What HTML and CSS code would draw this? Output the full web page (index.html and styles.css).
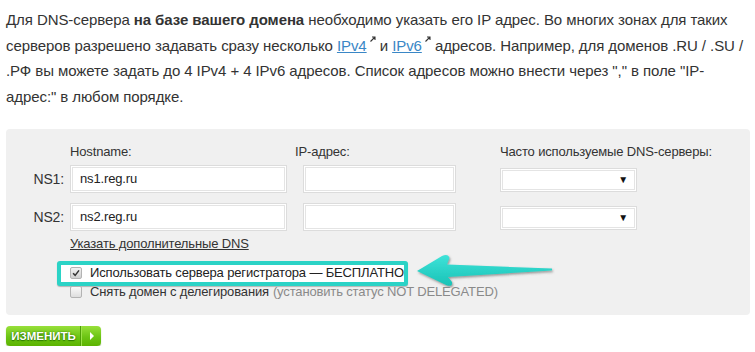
FILE: index.html
```html
<!DOCTYPE html>
<html>
<head>
    <title>DNS-серверы</title>
    <link rel="stylesheet" href="styles.css">
</head>
<body>
<div class="page">
    <p class="intro">
        Для DNS-сервера <b>на базе вашего домена</b> необходимо указать его IP адрес. Во многих зонах для таких
        серверов разрешено задавать сразу несколько <a href="#">IPv4</a><svg class="ext" viewBox="0 0 6 6"><path d="M0.5 5.5 L5 1 M2 1 H5 V4" fill="none" stroke="#333" stroke-width="1.1"/></svg> и
        <a href="#">IPv6</a><svg class="ext" viewBox="0 0 6 6"><path d="M0.5 5.5 L5 1 M2 1 H5 V4" fill="none" stroke="#333" stroke-width="1.1"/></svg> адресов. Например, для доменов .RU / .SU /
        .РФ вы можете задать до 4 IPv4 + 4 IPv6 адресов. Список адресов можно внести через "," в поле "IP-адрес:" в любом порядке.
    </p>

    <div class="dns-box">
        <div class="ns-head">
            <span class="h-host">Hostname:</span>
            <span class="h-ip">IP-адрес:</span>
            <span class="h-dns">Часто используемые DNS-серверы:</span>
        </div>

        <div class="ns-row">
            <label class="ns-label">NS1:</label>
            <input class="field host" value="ns1.reg.ru">
            <input class="field ip" value="">
            <div class="select"><span>▼</span></div>
        </div>
        <div class="ns-row last">
            <label class="ns-label">NS2:</label>
            <input class="field host" value="ns2.reg.ru">
            <input class="field ip" value="">
            <div class="select"><span>▼</span></div>
        </div>

        <div class="extra">
            <a href="#" class="more-dns">Указать дополнительные DNS</a>

            <div class="check-line marked">
                <span class="box checked"><svg viewBox="0 0 12 12"><path d="M2.5 6.2 L5 8.8 L9.6 2.8" fill="none" stroke="#333" stroke-width="1.8"/></svg></span>
                Использовать сервера регистратора — БЕСПЛАТНО
                <svg class="pointer" viewBox="0 0 142 36">
                    <defs>
                        <linearGradient id="teal" x1="0" y1="0" x2="0" y2="1">
                            <stop offset="0" stop-color="#3fe3d9"/>
                            <stop offset="1" stop-color="#18c2b6"/>
                        </linearGradient>
                        <filter id="sh" x="-10%" y="-30%" width="130%" height="170%">
                            <feDropShadow dx="1" dy="1.5" stdDeviation="0.8" flood-color="#555" flood-opacity="0.6"/>
                        </filter>
                    </defs>
                    <path d="M4 19 L29 4 Q35 1 36.5 6 L34 12.5 L139 16.5 L139 18.5 L35 25 L39 30 Q40 35 34 33.5 Z" fill="url(#teal)" filter="url(#sh)"/>
                </svg>
            </div>
            <div class="check-line">
                <span class="box"></span>
                Снять домен с делегирования <span class="note">(установить статус NOT DELEGATED)</span>
            </div>
        </div>
    </div>

    <button class="btn-change"><span class="btn-text">ИЗМЕНИТЬ</span><span class="btn-arrow"></span></button>
</div>
</body>
</html>
```

FILE: styles.css
```css
body {
    margin: 0;
    font-family: "Liberation Sans", Arial, sans-serif;
    color: #333;
    background: #fff;
}

.page {
    padding: 0 5px 0 6px;
}

.intro {
    margin: 7px 0 0;
    font-size: 15px;
    line-height: 25.7px;
    letter-spacing: -0.08px;
}

.intro a {
    color: #3a87c6;
}

.ext {
    width: 6px;
    height: 6px;
    margin: 0 0 0 3px;
    vertical-align: 9px;
}

.dns-box {
    margin-top: 19px;
    width: 744px;
    box-sizing: border-box;
    background: #f0f0f0;
    border-radius: 4px;
    padding: 15px 0 15px 0;
    font-size: 13px;
    letter-spacing: -0.15px;
}

.ns-head {
    display: flex;
    padding-left: 64px;
    line-height: 16px;
    margin-bottom: 5px;
}

.h-host { width: 225px; }
.h-ip { width: 205px; }

.ns-row {
    display: flex;
    align-items: center;
    height: 28px;
    margin-bottom: 10px;
}

.ns-row.last {
    margin-bottom: 5px;
}

.ns-label {
    width: 58px;
    margin-right: 6px;
    text-align: right;
    font-size: 14px;
}

.field {
    box-sizing: border-box;
    height: 28px;
    border: 1px solid #dcdcdc;
    box-shadow: inset 0 0 0 1px #fff, inset 0 0 0 2px #e4e4e4;
    padding: 0 9px;
    font-family: inherit;
    font-size: 13px;
    letter-spacing: -0.15px;
    color: #222;
    background: #fff;
    outline: none;
}

.field.host {
    width: 217px;
    margin-right: 16px;
}

.field.ip {
    width: 153px;
    margin-right: 44px;
}

.select {
    box-sizing: border-box;
    width: 137px;
    height: 24px;
    margin-top: 2px;
    border: 1px solid #dcdcdc;
    box-shadow: inset 0 0 0 1px #fff, inset 0 0 0 2px #e4e4e4;
    background: #fff;
    display: flex;
    justify-content: flex-end;
    align-items: center;
    padding-right: 8px;
    font-size: 10px;
    color: #111;
}

.extra {
    padding-left: 64px;
}

.more-dns {
    display: inline-block;
    line-height: 16px;
    color: #333;
}

.check-line {
    display: flex;
    align-items: center;
    line-height: 16px;
    position: relative;
}

.check-line.marked {
    box-sizing: border-box;
    width: 351px;
    margin: 9px 0 -2px -13px;
    padding: 0 0 1px 9px;
    border: 4px solid #2bd3c6;
    border-radius: 3px;
    background: #fff;
    box-shadow: 0 1px 1px rgba(0, 0, 0, 0.25);
    color: #222;
}

.box {
    box-sizing: border-box;
    width: 12px;
    height: 12px;
    margin: 0 8px 0 0;
    border: 1px solid #b3b3b3;
    border-radius: 2px;
    background: linear-gradient(#fafafa, #dedede);
    display: flex;
}

.box.checked {
    background: linear-gradient(#f2f2f2, #cfcfcf);
}

.box svg {
    width: 10px;
    height: 10px;
}

.note {
    color: #8a8a8a;
    margin-left: 4px;
}

.pointer {
    position: absolute;
    left: 352px;
    top: -13px;
    width: 142px;
    height: 36px;
}

.btn-change {
    margin-top: 11px;
    display: flex;
    align-items: stretch;
    height: 20px;
    width: 95px;
    padding: 0;
    border: none;
    border-radius: 4px;
    background: linear-gradient(#98e03a, #6cc414 55%, #5cb300);
    box-shadow: 0 1px 1px rgba(60, 120, 0, 0.5);
    cursor: pointer;
}

.btn-text {
    width: 73px;
    padding-left: 1px;
    border-right: 1px solid #4f9e08;
    box-shadow: 1px 0 0 #9ce24a;
    font-family: "Liberation Sans", Arial, sans-serif;
    font-weight: bold;
    font-size: 11.5px;
    line-height: 20px;
    color: #fff;
    text-shadow: 0 0 2px #2f7a00, 0 1px 1px #2f7a00;
}

.btn-arrow {
    flex: 1;
    display: flex;
    align-items: center;
    justify-content: center;
}

.btn-arrow::before {
    content: "";
    border-left: 4px solid #fff;
    border-top: 4px solid transparent;
    border-bottom: 4px solid transparent;
    margin-left: 1px;
}
```
